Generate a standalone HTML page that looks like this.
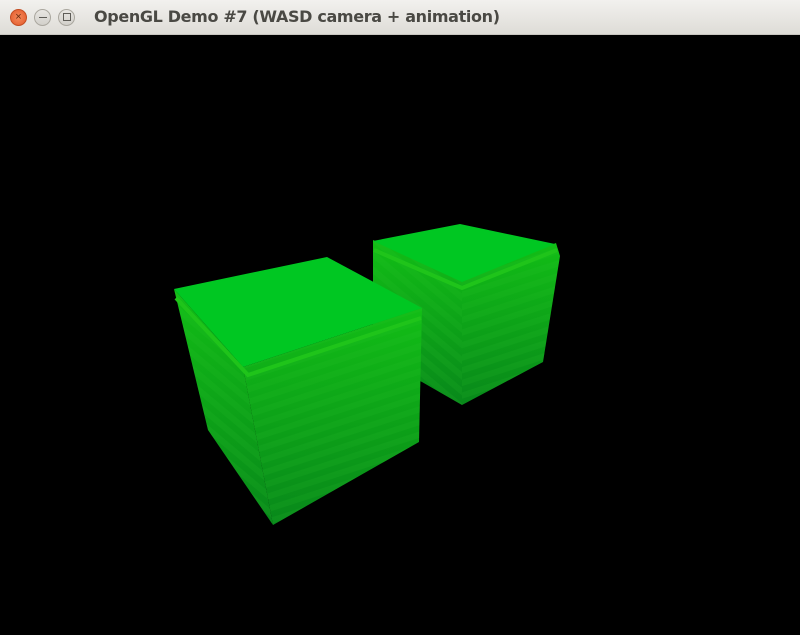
<!DOCTYPE html>
<html><head><style>
html,body{margin:0;padding:0;background:#000;width:800px;height:635px;overflow:hidden}
.bar{position:absolute;left:0;top:0;width:800px;height:34px;background:linear-gradient(#f2f1ee,#dedcd7);border-bottom:1px solid #c8c6c0}
.b{position:absolute;top:9px;width:17px;height:17px;border-radius:50%;box-sizing:border-box}
.t{position:absolute;left:94px;top:7px;font:bold 16px "DejaVu Sans","Liberation Sans",sans-serif;color:#4a4944;letter-spacing:-0.35px}
</style></head><body>
<div class="bar">
<div class="b" style="left:10px;background:radial-gradient(#f58a5a,#e2582a);border:1px solid #c44d22"></div>
<div style="position:absolute;left:10px;top:9px;width:17px;height:17px;font:11px 'Liberation Sans',sans-serif;color:#6a2a10;text-align:center;line-height:17px">×</div>
<div class="b" style="left:34px;background:linear-gradient(#e8e6e2,#d2d0cb);border:1px solid #aaa79f"></div>
<div style="position:absolute;left:39px;top:17px;width:8px;height:1px;background:#5e5c57"></div>
<div class="b" style="left:58px;background:linear-gradient(#e8e6e2,#d2d0cb);border:1px solid #aaa79f"></div>
<div style="position:absolute;left:63px;top:13px;width:6px;height:6px;border:1px solid #5e5c57"></div>
<div class="t">OpenGL Demo #7 (WASD camera + animation)</div>
</div>
<svg width="800" height="635" style="position:absolute;left:0;top:0">
<defs>
<linearGradient id="s1" x1="0" y1="0" x2="0" y2="1"><stop offset="0" stop-color="#12be16"/><stop offset="1" stop-color="#08881a"/></linearGradient>
<pattern id="st" width="12" height="12" patternUnits="userSpaceOnUse" patternTransform="rotate(-18)"><rect width="12" height="6" fill="#3c3" opacity=".12"/></pattern>
<pattern id="st2" width="12" height="12" patternUnits="userSpaceOnUse" patternTransform="rotate(40)"><rect width="12" height="6" fill="#3c3" opacity=".12"/></pattern>
</defs>
<polygon points="373,240 462,281 462,405 422,382 373,360" fill="url(#s1)"/>
<polygon points="373,240 462,281 462,405 422,382 373,360" fill="url(#st2)"/>
<polygon points="462,281 556,243 560,256 543,362 462,405" fill="url(#s1)"/>
<polygon points="462,281 556,243 560,256 543,362 462,405" fill="url(#st)"/>
<polygon points="373,241 460,224 555,244 462,282" fill="#00c722"/>
<polyline points="374,250 462,288 557,250" fill="none" stroke="#1fc41a" stroke-width="4"/>
<polygon points="174,289 243,367 273,525 208,430" fill="url(#s1)"/>
<polygon points="174,289 243,367 273,525 208,430" fill="url(#st2)"/>
<polygon points="243,367 422,308 419,442 273,525" fill="url(#s1)"/>
<polygon points="243,367 422,308 419,442 273,525" fill="url(#st)"/>
<polygon points="174,289 327,257 422,308 243,367" fill="#00c722"/>
<polyline points="176,298 248,375 421,318" fill="none" stroke="#1fc41a" stroke-width="4"/>
</svg>
</body></html>
